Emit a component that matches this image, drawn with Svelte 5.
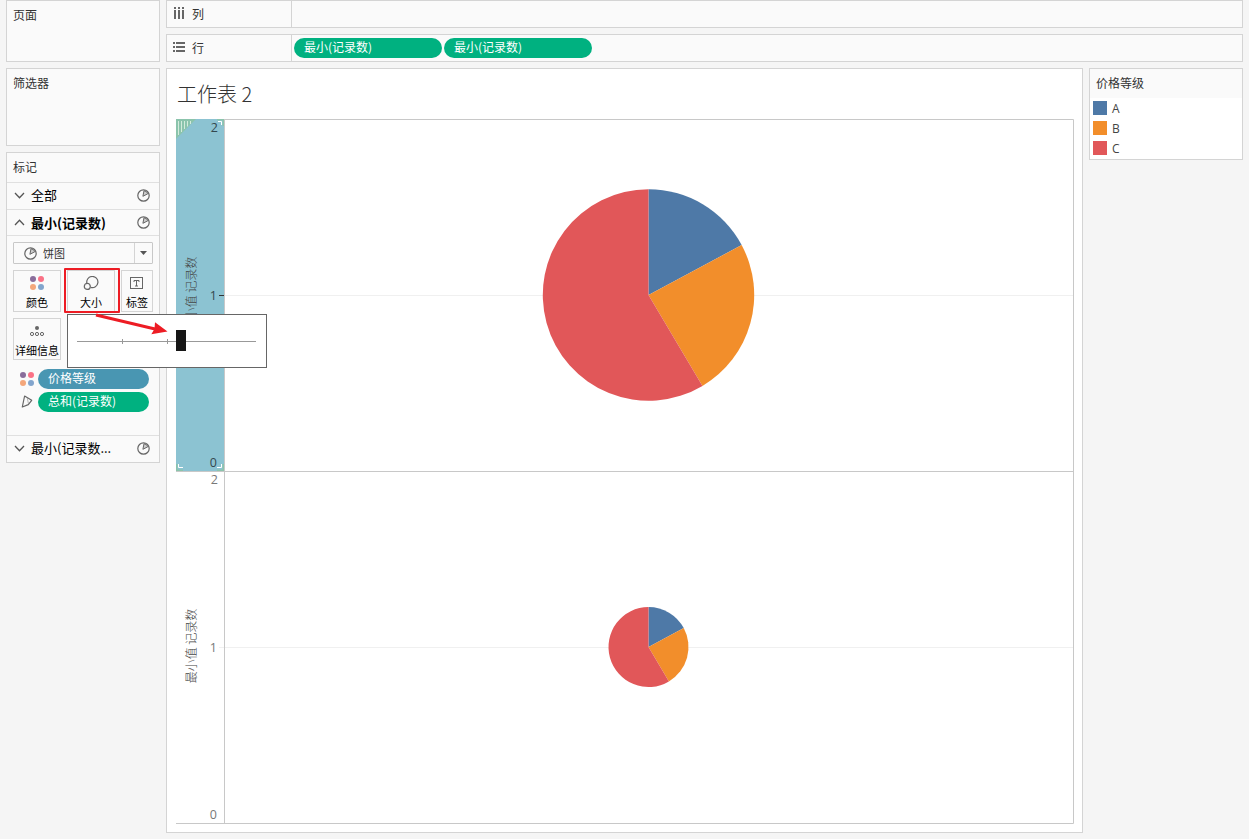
<script>
    const slices = [
        { name: 'A', color: '#4e79a7', from: 0, to: 61.8 },
        { name: 'B', color: '#f28e2b', from: 61.8, to: 149.3 },
        { name: 'C', color: '#e15759', from: 149.3, to: 360 }
    ]
    const rowPills = ['最小(记录数)', '最小(记录数)']
    // one entry per axis row, y values are relative to the chart
    const rows = [
        { top: 0, mid: 176, radius: 105.7, selected: true },
        { top: 352, mid: 528, radius: 40, selected: false }
    ]
    const dots = [
        { x: 3, y: 3, color: '#8a6d9b' },
        { x: 11, y: 3, color: '#fa7286' },
        { x: 3, y: 11, color: '#f4a77b' },
        { x: 11, y: 11, color: '#82a5cd' }
    ]

    function wedge(cx, cy, r, from, to) {
        const a = (from * Math.PI) / 180
        const b = (to * Math.PI) / 180
        const large = to - from > 180 ? 1 : 0
        return `M${cx} ${cy}L${cx + r * Math.sin(a)} ${cy - r * Math.cos(a)}A${r} ${r} 0 ${large} 1 ${cx + r * Math.sin(b)} ${cy - r * Math.cos(b)}Z`
    }
</script>

{#snippet pieIcon()}
    <svg class="pie-icon" width="13" height="13" viewBox="0 0 13 13">
        <circle cx="6.5" cy="6.5" r="5.7" fill="none" stroke="#666" stroke-width="1.2" />
        <path d="M5.9 7.3L7 1.700A5 5 0 0 1 10.900 4.700Z" fill="#ccc" stroke="#666" stroke-width="1" />
    </svg>
{/snippet}

{#snippet chevron(up)}
    <svg class="chevron" width="11" height="7" viewBox="0 0 11 7">
        <path d={up ? 'M1 6L5.5 1.3L10 6' : 'M1 1L5.5 5.7L10 1'} fill="none" stroke="#555" stroke-width="1.3" />
    </svg>
{/snippet}

{#snippet colorDots()}
    <svg width="14" height="14" viewBox="0 0 14 14">
        {#each dots as d}
            <circle cx={d.x} cy={d.y} r="3" fill={d.color} />
        {/each}
    </svg>
{/snippet}

<div class="workspace">
    <aside class="side">
        <section class="card pages">页面</section>
        <section class="card filters">筛选器</section>
        <section class="card marks">
            <div class="marks-title">标记</div>
            <div class="marks-row all">
                {@render chevron(false)}
                <span>全部</span>
                {@render pieIcon()}
            </div>
            <div class="marks-row open">
                {@render chevron(true)}
                <span>最小(记录数)</span>
                {@render pieIcon()}
            </div>
            <div class="marks-body">
                <div class="select">
                    {@render pieIcon()}
                    <span>饼图</span>
                    <i><svg width="7" height="4" viewBox="0 0 7 4"><path d="M0 0H7L3.5 4Z" fill="#555" /></svg></i>
                </div>
                <div class="buttons">
                    <div class="btn">
                        {@render colorDots()}
                        <span>颜色</span>
                    </div>
                    <div class="btn">
                        <svg width="16" height="14" viewBox="0 0 16 14">
                            <path d="M3.900 7.400A5.600 5.600 0 1 1 7.700 11.400" fill="none" stroke="#666" stroke-width="1.2" />
                            <circle cx="4.3" cy="10.4" r="3" fill="none" stroke="#666" stroke-width="1.2" />
                        </svg>
                        <span>大小</span>
                    </div>
                    <div class="btn narrow">
                        <svg width="14" height="14" viewBox="0 0 14 14">
                            <rect x="0.5" y="1.5" width="12" height="11" fill="none" stroke="#666" />
                            <path d="M4 6V4.500H9V6M6.500 4.500V10M5 10H8" fill="none" stroke="#666" />
                        </svg>
                        <span>标签</span>
                    </div>
                    <div class="btn">
                        <svg width="14" height="14" viewBox="0 0 14 14">
                            <circle cx="7" cy="4" r="2" fill="#666" />
                            <circle cx="2" cy="10" r="1.6" fill="none" stroke="#666" />
                            <circle cx="7" cy="10" r="1.6" fill="none" stroke="#666" />
                            <circle cx="12" cy="10" r="1.6" fill="none" stroke="#666" />
                        </svg>
                        <span>详细信息</span>
                    </div>
                </div>
                <div class="encoding">
                    {@render colorDots()}
                    <div class="pill blue">价格等级</div>
                </div>
                <div class="encoding">
                    <svg width="14" height="14" viewBox="0 0 14 14">
                        <path d="M4.6 1L11.7 5.300L8.300 9.600L2.300 12Z" fill="none" stroke="#666" stroke-width="1.2" stroke-linejoin="round" />
                        <path d="M7.200 2.700L8.600 9.300" fill="none" stroke="#888" stroke-width="0.6" />
                    </svg>
                    <div class="pill">总和(记录数)</div>
                </div>
            </div>
            <div class="marks-row last">
                {@render chevron(false)}
                <span>最小(记录数...</span>
                {@render pieIcon()}
            </div>
        </section>
    </aside>

    <main>
        <div class="shelf">
            <div class="shelf-name">
                <svg width="12" height="12" viewBox="0 0 12 12" fill="#666">
                    <path d="M1 0h2v2H1zM5 0h2v2H5zM9 0h2v2H9zM1 3h2v9H1zM5 3h2v9H5zM9 3h2v9H9z" />
                </svg>
                <span>列</span>
            </div>
        </div>
        <div class="shelf">
            <div class="shelf-name">
                <svg width="12" height="12" viewBox="0 0 12 12" fill="#666">
                    <path d="M0 1h2v2H0zM0 5h2v2H0zM0 9h2v2H0zM3 1h9v2H3zM3 5h9v2H3zM3 9h9v2H3z" />
                </svg>
                <span>行</span>
            </div>
            <div class="shelf-pills">
                {#each rowPills as p}
                    <div class="pill">{p}</div>
                {/each}
            </div>
        </div>

        <div class="content">
            <section class="sheet">
                <h1>工作表 2</h1>
                <svg class="chart" width="898" height="705" viewBox="0 0 898 705">
                    {#each rows as r}
                        {#if r.selected}
                            <rect x="0" y="0" width="48" height="352" fill="#8cc3d2" />
                            <path d="M0 0H20L0 20Z" fill="#8bc4ac" />
                            <path d="M2.5 2V16M5.5 2V13M8.5 2V10M11.5 2V7.5M14.5 2V5" stroke="#d3ebdc" />
                            <path d="M41 0H48V7H46.5V1.5H41ZM0 345H1.5V350.5H7V352H0ZM48 345V352H41V350.5H46.5V345Z" fill="#8bc4ac" />
                            <path d="M42 2.5H45.500V6M2.500 345V348.500H7M45.500 345V348.500H41" fill="none" stroke="#fff" />
                        {/if}
                        <path d="M{r.selected ? 49 : 43} {r.mid + 0.5}H897" stroke="#f0f0f0" />
                        <g class="axis" class:selected={r.selected}>
                            <text x="42" y={r.top + 13}>2</text>
                            <text x="41" y={r.mid + 5}>1</text>
                            <text x="41" y={r.top + 348}>0</text>
                            <text class="axis-title" transform="translate(20 {r.mid - 1}) rotate(-90)">最小值 记录数</text>
                        </g>
                        {#if r.selected}
                            <path d="M43 176.5H48" stroke="#333" />
                        {/if}
                        {#each slices as s}
                            <path d={wedge(472.5, r.mid, r.radius, s.from, s.to)} fill={s.color} />
                        {/each}
                    {/each}
                    <path d="M48 0.5H897.5V704.5H0M0 352.5H897.5M48.5 0V705" fill="none" stroke="#c8c8c8" />
                </svg>
            </section>

            <section class="legend">
                <h2>价格等级</h2>
                {#each slices as s}
                    <div class="legend-item"><i style="background: {s.color}"></i><span>{s.name}</span></div>
                {/each}
            </section>
        </div>
    </main>

    <!-- size slider, opened from the size button -->
    <div class="slider">
        <div class="track"></div>
        <i class="tick"></i>
        <i class="tick second"></i>
        <i class="thumb"></i>
    </div>
    <div class="highlight"></div>
    <svg class="arrow" width="76" height="24" viewBox="0 0 76 24">
        <path d="M1 2L60 16" stroke="#ed1c24" stroke-width="3" />
        <path d="M72.500 18.500L60 9.300L59.500 16L56.300 21.200Z" fill="#ed1c24" />
    </svg>
</div>

<style>
    :global(body) {
        background: #f5f5f5;
    }
    .workspace {
        position: relative;
        box-sizing: border-box;
        display: flex;
        gap: 6px;
        width: 1249px;
        height: 839px;
        padding: 0 6px;
        overflow: hidden;
        background: #f5f5f5;
        font-family: "Noto Sans CJK SC", sans-serif;
        font-size: 12px;
        line-height: 18px;
        color: #333;
        white-space: nowrap;
    }
    .workspace :global(*) {
        box-sizing: border-box;
    }
    svg {
        display: block;
        flex: none;
    }
    .side {
        display: flex;
        flex-direction: column;
        gap: 6px;
        width: 154px;
    }
    .card {
        border: 1px solid #d4d4d4;
        background: #fafafa;
        padding: 5px 6px;
    }
    .pages {
        height: 62px;
    }
    .filters {
        height: 78px;
    }
    .marks {
        height: 311px;
        padding: 0;
    }
    .marks-title {
        height: 29px;
        padding: 5px 6px;
    }
    .marks-row {
        display: flex;
        align-items: center;
        height: 27px;
        padding: 0 9px 2px 7px;
        border-top: 1px solid #e0e0e0;
        font-size: 13px;
        color: #000;
    }
    .marks-row span {
        flex: 1;
        margin-left: 6px;
    }
    .open {
        height: 26px;
        padding-bottom: 0;
        font-weight: bold;
    }
    .marks-body {
        height: 200px;
        padding: 6px 6px 0;
        border-top: 1px solid #e0e0e0;
    }
    .select {
        display: flex;
        align-items: center;
        width: 140px;
        height: 22px;
        padding-left: 10px;
        border: 1px solid #c8c8c8;
        border-radius: 1px;
        font-size: 11px;
    }
    .select span {
        flex: 1;
        margin: -1px 0 0 6px;
    }
    .select i {
        display: flex;
        align-items: center;
        justify-content: center;
        width: 18px;
        height: 20px;
        border-left: 1px solid #d4d4d4;
    }
    .buttons {
        display: flex;
        flex-wrap: wrap;
        gap: 6px;
        width: 140px;
        margin-top: 6px;
    }
    .btn {
        display: flex;
        flex-direction: column;
        align-items: center;
        width: 48px;
        height: 42px;
        padding-top: 5px;
        border: 1px solid #d4d4d4;
        font-size: 11px;
        line-height: 16px;
        color: #000;
    }
    .btn span {
        margin-top: 4px;
    }
    .narrow {
        width: 32px;
    }
    .encoding {
        display: flex;
        align-items: center;
        gap: 4px;
        height: 20px;
        margin: 9px 0 0 7px;
    }
    .encoding + .encoding {
        margin-top: 3px;
    }
    .pill {
        width: 148px;
        height: 20px;
        padding-left: 10px;
        border-radius: 10px;
        background: #00b180;
        color: #fff;
        line-height: 18px;
    }
    .encoding .pill {
        width: 111px;
    }
    .pill.blue {
        background: #4996b2;
    }
    main {
        display: flex;
        flex-direction: column;
        gap: 6px;
        width: 1077px;
    }
    .shelf {
        display: flex;
        height: 28px;
        border: 1px solid #d4d4d4;
        background: #fafafa;
    }
    .shelf-name {
        display: flex;
        align-items: center;
        gap: 7px;
        width: 125px;
        padding-left: 6px;
        border-right: 1px solid #d4d4d4;
    }
    .shelf-name svg {
        margin-top: -2px;
    }
    .shelf-pills {
        display: flex;
        gap: 2px;
        padding: 3px 2px;
    }
    .content {
        display: flex;
        align-items: flex-start;
        gap: 6px;
    }
    .sheet {
        width: 917px;
        height: 765px;
        border: 1px solid #d4d4d4;
        background: #fff;
        padding-left: 9px;
    }
    h1 {
        height: 50px;
        margin: 0;
        padding-left: 1px;
        font-size: 20px;
        font-weight: 300;
        line-height: 50px;
        color: #333;
    }
    .axis text {
        font-family: "Open Sans", sans-serif;
        font-size: 12.5px;
        fill: #787878;
        text-anchor: end;
    }
    .axis.selected text {
        fill: #33474e;
    }
    .axis text.axis-title {
        font-family: "Noto Sans CJK SC", sans-serif;
        font-size: 12px;
        font-weight: 300;
        fill: #444;
        text-anchor: middle;
    }
    .legend {
        width: 154px;
        height: 92px;
        border: 1px solid #d4d4d4;
        background: #fff;
    }
    h2 {
        height: 29px;
        margin: 0;
        padding: 5px 6px;
        background: #fafafa;
        font-size: 12px;
        font-weight: normal;
    }
    .legend-item {
        display: flex;
        align-items: center;
        gap: 5px;
        height: 20px;
        padding-left: 3px;
        font-family: "Open Sans", sans-serif;
        color: #444;
    }
    .legend-item i {
        width: 14px;
        height: 14px;
    }
    .legend-item span {
        padding-top: 2px;
    }
    .slider {
        position: absolute;
        left: 67px;
        top: 314px;
        width: 200px;
        height: 54px;
        border: 1px solid #666;
        background: #fff;
    }
    .track {
        margin: 26px 10px 0 9px;
        height: 1px;
        background: #999;
    }
    .tick {
        position: absolute;
        left: 54px;
        top: 24px;
        width: 1px;
        height: 5px;
        background: #999;
    }
    .second {
        left: 99px;
    }
    .thumb {
        position: absolute;
        left: 108px;
        top: 15px;
        width: 10px;
        height: 21px;
        background: #161616;
    }
    .highlight {
        position: absolute;
        left: 64px;
        top: 268px;
        width: 56px;
        height: 45px;
        border: 2px solid #ed1c24;
        border-radius: 1px;
    }
    .arrow {
        position: absolute;
        left: 95px;
        top: 313px;
    }
</style>
